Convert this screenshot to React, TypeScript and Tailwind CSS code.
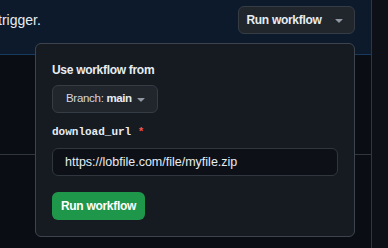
import React from 'react';

function Caret({ className = '' }: { className?: string }) {
  return (
    <svg viewBox="0 0 16 16" width="16" height="16" fill="currentColor" className={className}>
      <path d="m4.427 7.427 3.396 3.396a.25.25 0 0 0 .354 0l3.396-3.396A.25.25 0 0 0 11.396 7H4.604a.25.25 0 0 0-.177.427Z" />
    </svg>
  );
}

export default function App() {
  return (
    <div className="w-[388px] h-[248px] overflow-hidden bg-[#0d1117] flex text-[#e6edf3] font-['Liberation_Sans',Arial,sans-serif]">
      <div className="w-[372px] shrink-0 border-r border-[#30363d] bg-[#0a0e14]">
        <div className="h-[55px] bg-[#0c1a2c] border-b border-[#173a5e] flex items-start justify-between pr-4 pt-[6px]">
          <span className="-ml-[2px] text-[14px] leading-[28px]">trigger.</span>
          <div className="relative">
            <button className="h-[28px] w-[117px] flex items-center justify-center gap-1 rounded-md bg-[#21262d] border border-[#363c44] text-[12px] font-bold tracking-[-0.3px]">
              Run workflow
              <Caret className="text-[#9198a1] ml-[5px]" />
            </button>
            <div className="absolute right-0 top-[37px] w-[320px] rounded-md border border-[#3d444d] bg-[#161b22] p-4 z-10">
              <div className="text-[12px] font-bold tracking-[-0.3px] leading-5">Use workflow from</div>
              <button className="mt-[5px] h-[28px] w-[106px] flex items-center rounded-md bg-[#21262d] border border-[#363c44] pl-[13px] text-[11.5px]">
                <span className="text-[#d1d7e0] tracking-[-0.3px]">Branch:&nbsp;</span>
                <span className="font-bold tracking-[-0.4px]">main</span>
                <Caret className="text-[#9198a1] ml-[1px]" />
              </button>
              <div className="mt-[10px] leading-[18px] text-[11px] font-bold font-['Liberation_Mono','DejaVu_Sans_Mono',monospace]">
                download_url <span className="text-[#f85149]">*</span>
              </div>
              <div className="mt-[7px] h-[28px] w-full rounded-md border border-[#30363d] bg-[#0d1117] flex items-center px-3 text-[12.5px]">
                https://lobfile.com/file/myfile.zip
              </div>
              <button className="mt-4 h-[28px] w-[93px] rounded-md bg-[#1f974a] text-white text-[12px] font-bold tracking-[-0.3px] flex items-center justify-center">
                Run workflow
              </button>
            </div>
          </div>
        </div>
        <div className="h-[100px] border-b border-[#30363d]" />
      </div>
      <div className="flex-1 bg-[#0d1117]" />
    </div>
  );
}
